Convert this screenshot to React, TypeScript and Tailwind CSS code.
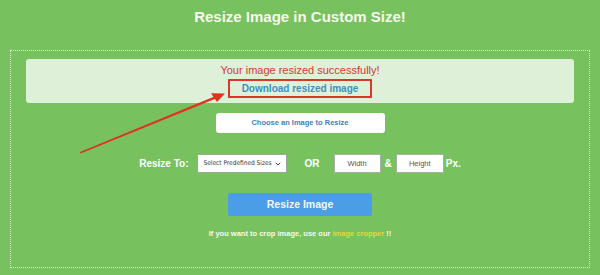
import { ChevronDown } from "lucide-react";

export default function App() {
  return (
    <div className="relative w-full h-[275px] bg-[#77c25f] overflow-hidden font-['Liberation_Sans',Arial,sans-serif]">
      {/* Title */}
      <div className="h-[50px] pt-[7px] text-center">
        <h1 className="text-[15px] leading-[20px] font-bold text-[#f6f8ef]">Resize Image in Custom Size!</h1>
      </div>

      {/* Tool box */}
      <div className="mx-[10px] h-[218px] border border-dotted border-[#dcefd2] px-[15px] pt-[8px] flex flex-col items-center">
        <div className="w-full h-[44px] bg-[#dff0d8] rounded-[3px] flex flex-col items-center justify-center">
          <p className="text-[11px] leading-[13px] text-[#d8372c]">Your image resized successfully!</p>
          <div className="mt-[2px] w-[144px] h-[19px] border-2 border-[#d8372c] flex items-center justify-center">
            <span className="text-[10px] font-bold text-[#3d8fc9] whitespace-nowrap">Download resized image</span>
          </div>
        </div>

        <button className="mt-[10px] w-[169px] h-[20px] bg-white rounded-[3px] text-[7.5px] font-bold text-[#3d7fc0]">
          Choose an Image to Resize
        </button>

        <div className="mt-[21px] h-[19px] flex items-center text-white font-bold">
          <span className="text-[10px] mr-[8px]">Resize To:</span>
          <div className="w-[90px] h-[19px] bg-white border border-[#9aa79a] flex items-center justify-between pl-[6px] pr-[4px]">
            <span className="text-[6.5px] font-normal text-[#333] font-['DejaVu_Sans_Condensed',sans-serif]">Select Predefined Sizes</span>
            <ChevronDown className="w-[8px] h-[8px] text-[#444]" strokeWidth={3} />
          </div>
          <span className="text-[10px] ml-[18px] mr-[14px]">OR</span>
          <div className="w-[47px] h-[19px] bg-white border border-[#a6b0a6] flex items-center justify-center">
            <span className="text-[7.5px] font-normal text-[#555]">Width</span>
          </div>
          <span className="text-[10px] mx-[4px]">&amp;</span>
          <div className="w-[48px] h-[19px] bg-white border border-[#a6b0a6] flex items-center justify-center">
            <span className="text-[7.5px] font-normal text-[#555]">Height</span>
          </div>
          <span className="text-[10px] ml-[2px]">Px.</span>
        </div>

        <button className="mt-[20px] w-[144px] h-[23px] bg-[#4b9de6] rounded-[2px] text-[10.5px] font-bold text-[#f3f7fb]">
          Resize Image
        </button>

        <p className="mt-[12px] text-[7.5px] font-bold text-[#f6f8ef]">
          If you want to crop image, use our <span className="text-[#e9d33a]">image cropper</span> !!
        </p>
      </div>

      {/* Annotation arrow */}
      <svg className="absolute left-0 top-0 pointer-events-none" width="600" height="275" viewBox="0 0 600 275">
        <polygon points="80,152 80.6,153.4 216,98.6 215,96.2" fill="#e2321f" />
        <polygon points="225,93.5 211,93.2 217,102" fill="#e2321f" />
      </svg>
    </div>
  );
}
